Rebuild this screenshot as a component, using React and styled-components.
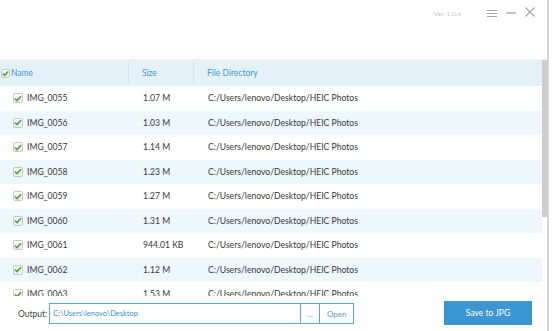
import React from 'react';
import styled, { createGlobalStyle } from 'styled-components';

const files = [
  ['IMG_0055', '1.07 M'],
  ['IMG_0056', '1.03 M'],
  ['IMG_0057', '1.14 M'],
  ['IMG_0058', '1.23 M'],
  ['IMG_0059', '1.27 M'],
  ['IMG_0060', '1.31 M'],
  ['IMG_0061', '944.01 KB'],
  ['IMG_0062', '1.12 M'],
  ['IMG_0063', '1.53 M'],
];

const dir = 'C:/Users/lenovo/Desktop/HEIC Photos';

const Check = ({ size }) => (
  <Box $size={size}>
    <svg width="8" height="7" viewBox="0 0 8 7">
      <path d="M1 3.6 L3.1 5.6 L7 1.2" fill="none" stroke="#4aa82c" strokeWidth="1.7" />
    </svg>
  </Box>
);

const App = () => {
  return (
    <>
      <GlobalStyle />
      <Window>
        <TitleBar>
          <Version>Ver: 1.0.4</Version>
          <IconBtn>
            <svg width="10" height="9" viewBox="0 0 10 9">
              <path d="M0 1.5H10M0 4.5H10M0 7.5H10" stroke="#a3a3a3" strokeWidth="1.2" />
            </svg>
          </IconBtn>
          <IconBtn>
            <svg width="10" height="9" viewBox="0 0 10 9">
              <path d="M0 5H10" stroke="#a3a3a3" strokeWidth="1.2" />
            </svg>
          </IconBtn>
          <IconBtn>
            <svg width="10" height="10" viewBox="0 0 10 10">
              <path d="M0.5 0.5L9.5 9.5M9.5 0.5L0.5 9.5" stroke="#a3a3a3" strokeWidth="1.1" />
            </svg>
          </IconBtn>
        </TitleBar>

        <TableArea>
          <Table>
            <HeaderRow>
              <HeaderCell $first>
                <Check size={9} />
                Name
              </HeaderCell>
              <HeaderCell $divider>Size</HeaderCell>
              <HeaderCell $divider>File Directory</HeaderCell>
            </HeaderRow>
            {files.map(([name, size], i) => (
              <Row key={name} $striped={i % 2 === 1}>
                <NameCell>
                  <Check size={10} />
                  {name}
                </NameCell>
                <Cell>{size}</Cell>
                <Cell>{dir}</Cell>
              </Row>
            ))}
          </Table>
          <ScrollTrack>
            <Thumb />
          </ScrollTrack>
        </TableArea>

        <Footer>
          <Label>Output:</Label>
          <PathBox>
            <PathText>C:\Users\lenovo\Desktop</PathText>
            <PathButton $w={18}>...</PathButton>
            <PathButton $w={33}>Open</PathButton>
          </PathBox>
          <SaveButton>Save to JPG</SaveButton>
        </Footer>
      </Window>
    </>
  );
};

export default App;

const GlobalStyle = createGlobalStyle`
  body {
    margin: 0;
    background: #fff;
    font-family: Lato, "Open Sans", sans-serif;
  }
`;

const Window = styled.div`
  width: 549px;
  height: 331px;
  box-sizing: border-box;
  border-right: 2px solid #d4d4d4;
  background: #fff;
  display: flex;
  flex-direction: column;
  overflow: hidden;
`;

const TitleBar = styled.div`
  height: 59px;
  flex-shrink: 0;
  display: flex;
  justify-content: flex-end;
  align-items: flex-start;
  padding: 7px 12px 0 0;
  box-sizing: border-box;
  gap: 9px;
`;

const Version = styled.span`
  font-size: 6.5px;
  color: #c4c4c4;
  margin-top: 3px;
  margin-right: 17px;
`;

const IconBtn = styled.span`
  width: 10px;
  height: 10px;
  display: flex;
  align-items: center;
  justify-content: center;
  &:nth-of-type(2) svg {
    margin-top: 2px;
  }
`;

const TableArea = styled.div`
  height: 236px;
  flex-shrink: 0;
  display: flex;
  overflow: hidden;
  border-top: 1px solid #eef2f5;
`;

const Table = styled.div`
  flex: 1;
  display: flex;
  flex-direction: column;
`;

const HeaderRow = styled.div`
  height: 26px;
  flex-shrink: 0;
  display: grid;
  grid-template-columns: 128px 65px 1fr;
  align-items: center;
  background: #e4f1f8;
`;

const HeaderCell = styled.div`
  display: flex;
  align-items: center;
  gap: 1px;
  height: 20px;
  font-size: 8.5px;
  color: #3c9ad8;
  padding-left: ${(p) => (p.$first ? '1px' : '13px')};
  border-left: ${(p) => (p.$divider ? '1px solid #d3e2eb' : 'none')};
`;

const Row = styled.div`
  height: 24.5px;
  flex-shrink: 0;
  display: grid;
  grid-template-columns: 128px 65px 1fr;
  align-items: center;
  background: ${(p) => (p.$striped ? '#eef7fb' : '#fff')};
  font-size: 8.6px;
  color: #383838;
`;

const Cell = styled.div`
  padding-left: 15px;
  white-space: nowrap;
`;

const NameCell = styled.div`
  display: flex;
  align-items: center;
  gap: 4px;
  padding-left: 13px;
`;

const Box = styled.span`
  width: ${(p) => p.$size}px;
  height: ${(p) => p.$size}px;
  box-sizing: border-box;
  border: 1px solid #c6c6c6;
  border-radius: 2px;
  background: linear-gradient(#fff, #eeeeee);
  display: flex;
  align-items: center;
  justify-content: center;
  flex-shrink: 0;
`;

const ScrollTrack = styled.div`
  width: 5px;
  flex-shrink: 0;
`;

const Thumb = styled.div`
  height: 157px;
  background: #cdcdcd;
`;

const Footer = styled.div`
  flex: 1;
  display: flex;
  align-items: center;
  padding: 0 15px 0 18px;
`;

const Label = styled.span`
  font-size: 8.5px;
  color: #444;
  margin-right: 2px;
`;

const PathBox = styled.div`
  width: 305px;
  height: 21px;
  box-sizing: border-box;
  border: 1px solid #5aa7dc;
  display: flex;
  align-items: stretch;
`;

const PathText = styled.div`
  flex: 1;
  display: flex;
  align-items: center;
  padding-left: 3px;
  font-size: 7.5px;
  color: #3a8fd2;
`;

const PathButton = styled.div`
  width: ${(p) => p.$w}px;
  border-left: 1px solid #5aa7dc;
  display: flex;
  align-items: center;
  justify-content: center;
  font-size: 8px;
  color: #5a9bd3;
`;

const SaveButton = styled.button`
  margin-left: auto;
  width: 88px;
  height: 24px;
  border: none;
  background: #3b96d1;
  color: #fff;
  font-family: Lato, sans-serif;
  font-size: 8.5px;
  padding: 0;
  margin-top: -2px;
`;
